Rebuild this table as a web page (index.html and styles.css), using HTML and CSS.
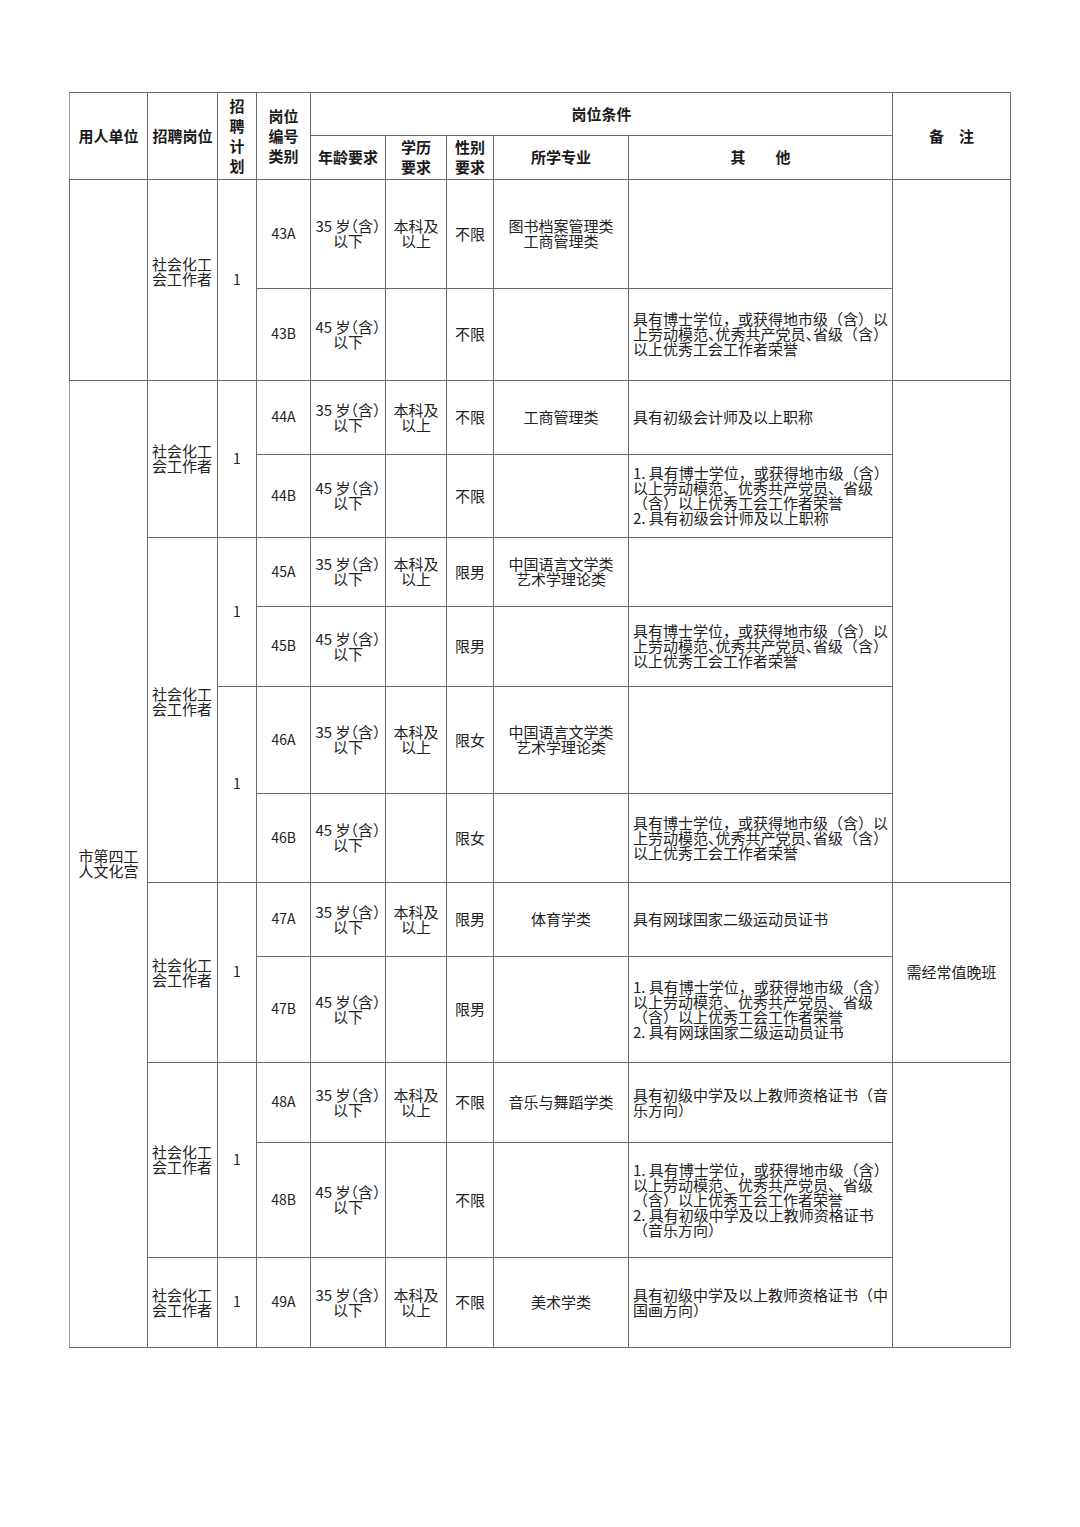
FILE: index.html
```html
<!DOCTYPE html>
<html lang="zh-CN">
<head>
<meta charset="utf-8">
<title>岗位条件表</title>
<link rel="stylesheet" href="styles.css">
</head>
<body>
<table class="sheet">
  <colgroup>
    <col class="c-unit"><col class="c-post"><col class="c-plan"><col class="c-code">
    <col class="c-age"><col class="c-edu"><col class="c-sex"><col class="c-major">
    <col class="c-other"><col class="c-note">
  </colgroup>
  <thead>
    <tr class="h43">
      <th rowspan="2">用人单位</th>
      <th rowspan="2">招聘岗位</th>
      <th rowspan="2" class="tall">招<br>聘<br>计<br>划</th>
      <th rowspan="2" class="tall">岗位<br>编号<br>类别</th>
      <th colspan="5">岗位条件</th>
      <th rowspan="2">备　注</th>
    </tr>
    <tr class="h44">
      <th>年龄要求</th>
      <th class="tall">学历<br>要求</th>
      <th class="tall">性别<br>要求</th>
      <th>所学专业</th>
      <th>其　　他</th>
    </tr>
  </thead>
  <tbody>
    <tr class="h109">
      <td rowspan="2"></td>
      <td rowspan="2" class="post lift">社会化工<br>会工作者</td>
      <td rowspan="2" class="num">1</td>
      <td class="code">43A</td>
      <td class="age">35 岁（含）<br>以下</td>
      <td>本科及<br>以上</td>
      <td>不限</td>
      <td>图书档案管理类<br>工商管理类</td>
      <td class="other"></td>
      <td rowspan="2"></td>
    </tr>
    <tr class="h92">
      <td class="code">43B</td>
      <td class="age">45 岁（含）<br>以下</td>
      <td></td>
      <td>不限</td>
      <td></td>
      <td class="other">具有博士学位，或获得地市级（含）以<br>上劳动模范<span class="half">、</span>优秀共产党员<span class="half">、</span>省级（含）<br>以上优秀工会工作者荣誉</td>
    </tr>

    <tr class="h74">
      <td rowspan="11" class="unit">市第四工<br>人文化宫</td>
      <td rowspan="2" class="post">社会化工<br>会工作者</td>
      <td rowspan="2" class="num">1</td>
      <td class="code">44A</td>
      <td class="age">35 岁（含）<br>以下</td>
      <td>本科及<br>以上</td>
      <td>不限</td>
      <td>工商管理类</td>
      <td class="other">具有初级会计师及以上职称</td>
      <td rowspan="6"></td>
    </tr>
    <tr class="h83">
      <td class="code">44B</td>
      <td class="age">45 岁（含）<br>以下</td>
      <td></td>
      <td>不限</td>
      <td></td>
      <td class="other">1. 具有博士学位，或获得地市级（含）<br>以上劳动模范、优秀共产党员、省级<br>（含）以上优秀工会工作者荣誉<br>2. 具有初级会计师及以上职称</td>
    </tr>

    <tr class="h69">
      <td rowspan="4" class="post lift">社会化工<br>会工作者</td>
      <td rowspan="2" class="num">1</td>
      <td class="code">45A</td>
      <td class="age">35 岁（含）<br>以下</td>
      <td>本科及<br>以上</td>
      <td>限男</td>
      <td>中国语言文学类<br>艺术学理论类</td>
      <td class="other"></td>
    </tr>
    <tr class="h80">
      <td class="code">45B</td>
      <td class="age">45 岁（含）<br>以下</td>
      <td></td>
      <td>限男</td>
      <td></td>
      <td class="other">具有博士学位，或获得地市级（含）以<br>上劳动模范<span class="half">、</span>优秀共产党员<span class="half">、</span>省级（含）<br>以上优秀工会工作者荣誉</td>
    </tr>
    <tr class="h107">
      <td rowspan="2" class="num">1</td>
      <td class="code">46A</td>
      <td class="age">35 岁（含）<br>以下</td>
      <td>本科及<br>以上</td>
      <td>限女</td>
      <td>中国语言文学类<br>艺术学理论类</td>
      <td class="other"></td>
    </tr>
    <tr class="h89">
      <td class="code">46B</td>
      <td class="age">45 岁（含）<br>以下</td>
      <td></td>
      <td>限女</td>
      <td></td>
      <td class="other">具有博士学位，或获得地市级（含）以<br>上劳动模范<span class="half">、</span>优秀共产党员<span class="half">、</span>省级（含）<br>以上优秀工会工作者荣誉</td>
    </tr>

    <tr class="h74">
      <td rowspan="2" class="post">社会化工<br>会工作者</td>
      <td rowspan="2" class="num">1</td>
      <td class="code">47A</td>
      <td class="age">35 岁（含）<br>以下</td>
      <td>本科及<br>以上</td>
      <td>限男</td>
      <td>体育学类</td>
      <td class="other">具有网球国家二级运动员证书</td>
      <td rowspan="2">需经常值晚班</td>
    </tr>
    <tr class="h106">
      <td class="code">47B</td>
      <td class="age">45 岁（含）<br>以下</td>
      <td></td>
      <td>限男</td>
      <td></td>
      <td class="other">1. 具有博士学位，或获得地市级（含）<br>以上劳动模范、优秀共产党员、省级<br>（含）以上优秀工会工作者荣誉<br>2. 具有网球国家二级运动员证书</td>
    </tr>

    <tr class="h80">
      <td rowspan="2" class="post">社会化工<br>会工作者</td>
      <td rowspan="2" class="num">1</td>
      <td class="code">48A</td>
      <td class="age">35 岁（含）<br>以下</td>
      <td>本科及<br>以上</td>
      <td>不限</td>
      <td>音乐与舞蹈学类</td>
      <td class="other">具有初级中学及以上教师资格证书（音<br>乐方向）</td>
      <td rowspan="3"></td>
    </tr>
    <tr class="h115">
      <td class="code">48B</td>
      <td class="age">45 岁（含）<br>以下</td>
      <td></td>
      <td>不限</td>
      <td></td>
      <td class="other">1. 具有博士学位，或获得地市级（含）<br>以上劳动模范、优秀共产党员、省级<br>（含）以上优秀工会工作者荣誉<br>2. 具有初级中学及以上教师资格证书<br>（音乐方向）</td>
    </tr>

    <tr class="h90">
      <td class="post">社会化工<br>会工作者</td>
      <td class="num">1</td>
      <td class="code">49A</td>
      <td class="age">35 岁（含）<br>以下</td>
      <td>本科及<br>以上</td>
      <td>不限</td>
      <td>美术学类</td>
      <td class="other">具有初级中学及以上教师资格证书（中<br>国画方向）</td>
    </tr>
  </tbody>
</table>
</body>
</html>
```

FILE: styles.css
```css
html, body {
  margin: 0;
  padding: 0;
  background: #ffffff;
}

body {
  font-family: "Noto Sans CJK SC", "Noto Sans", sans-serif;
  color: #222222;
  min-height: 1527px;
}

.sheet {
  margin: 92px 0 0 69px;
  width: 941px;
  table-layout: fixed;
  border-collapse: collapse;
  font-size: 15px;
  line-height: 15px;
}

.c-unit { width: 78px; }
.c-post { width: 70px; }
.c-plan { width: 39px; }
.c-code { width: 54px; }
.c-age { width: 75px; }
.c-edu { width: 61px; }
.c-sex { width: 47px; }
.c-major { width: 135px; }
.c-other { width: 264px; }
.c-note { width: 118px; }

.sheet th,
.sheet td {
  border: 1px solid #6a6a6a;
  padding: 0 4px 2px;
  text-align: center;
  vertical-align: middle;
  white-space: nowrap;
  overflow: visible;
}

.sheet th {
  font-weight: 700;
  line-height: 20px;
  color: #1a1a1a;
  padding-bottom: 1px;
}

.sheet tr:first-child th:first-child,
.sheet tbody td.unit {
  border-left-color: #9a9a9a;
}

.h43 { height: 43px; }
.h44 { height: 44px; }
.h69 { height: 69px; }
.h74 { height: 74px; }
.h80 { height: 80px; }
.h83 { height: 83px; }
.h89 { height: 89px; }
.h90 { height: 90px; }
.h92 { height: 92px; }
.h106 { height: 106px; }
.h107 { height: 107px; }
.h109 { height: 109px; }
.h115 { height: 115px; }

.sheet td.post {
  text-align: left;
  padding-left: 4px;
}

.sheet td.lift {
  padding-bottom: 18px;
}

.sheet td.num,
.sheet td.code {
  font-size: 14px;
}

.sheet td.age {
  font-feature-settings: "halt";
  padding-left: 2px;
  padding-right: 2px;
}

.sheet td.other {
  text-align: left;
  padding-left: 4px;
  padding-right: 2px;
}

.half {
  font-feature-settings: "halt";
}
```
